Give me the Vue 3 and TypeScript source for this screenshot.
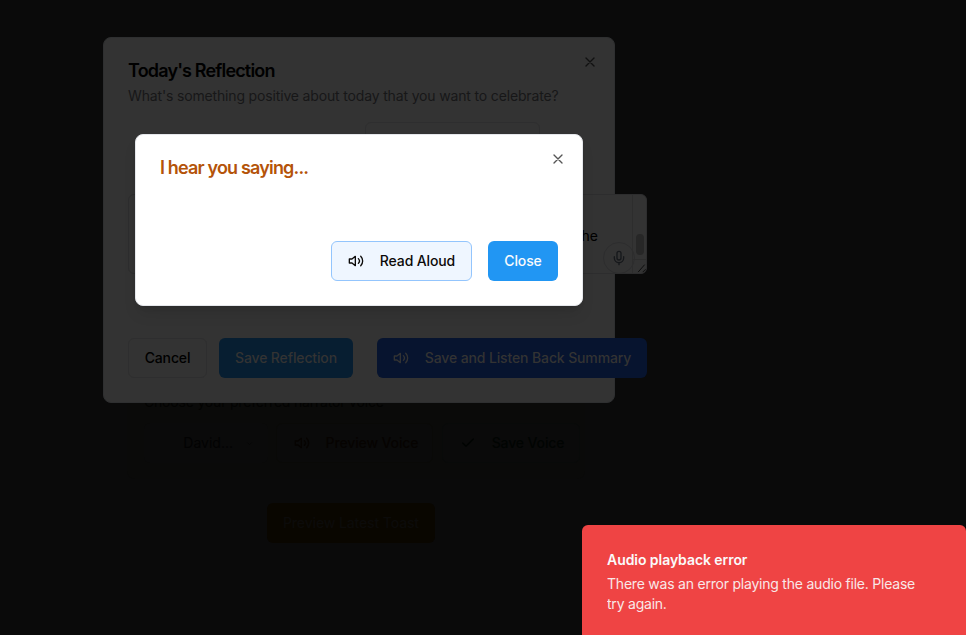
<script setup lang="ts">
import { ref } from 'vue'

const reflectionOpen = ref(true)
const summaryOpen = ref(true)
const entry = ref('the')
</script>

<template>
  <div class="screen">
    <main class="page">
      <section class="voice">
        <p class="voice-label">Choose your preferred narrator voice</p>
        <div class="voice-row">
          <div class="voice-select">
            <span>David...</span>
            <svg class="chev" viewBox="0 0 24 24"><path d="m6 9 6 6 6-6" /></svg>
          </div>
          <button class="btn preview">
            <svg class="icon" viewBox="0 0 24 24"><path d="M11 5 6 9H2v6h4l5 4z" /><path d="M15.54 8.46a5 5 0 0 1 0 7.07" /><path d="M19.07 4.93a10 10 0 0 1 0 14.14" /></svg>
            Preview Voice
          </button>
          <button class="btn keep">
            <svg class="icon" viewBox="0 0 24 24"><path d="M20 6 9 17l-5-5" /></svg>
            Save Voice
          </button>
        </div>
      </section>
      <button class="btn latest">Preview Latest Toast</button>
    </main>

    <section v-if="reflectionOpen" class="dialog reflection">
      <button class="x" aria-label="Close" @click="reflectionOpen = false">
        <svg class="icon" viewBox="0 0 24 24"><path d="M18 6 6 18M6 6l12 12" /></svg>
      </button>
      <h2>Today's Reflection</h2>
      <p class="desc">What's something positive about today that you want to celebrate?</p>
      <div class="picker"></div>
      <div class="field">
        <span class="field-text">{{ entry }}</span>
        <span class="mic">
          <svg class="icon" viewBox="0 0 24 24"><path d="M12 2a3 3 0 0 0-3 3v7a3 3 0 0 0 6 0V5a3 3 0 0 0-3-3Z" /><path d="M19 10v2a7 7 0 0 1-14 0v-2" /><path d="M12 19v3" /></svg>
        </span>
        <div class="scroll">
          <i class="thumb"></i>
          <svg class="grip" viewBox="0 0 14 14"><path d="M5 13 12 5M10 13l3-3" /></svg>
        </div>
      </div>
      <div class="actions">
        <button class="btn cancel">Cancel</button>
        <button class="btn save">Save Reflection</button>
        <button class="btn listen">
          <svg class="icon" viewBox="0 0 24 24"><path d="M11 5 6 9H2v6h4l5 4z" /><path d="M15.54 8.46a5 5 0 0 1 0 7.07" /><path d="M19.07 4.93a10 10 0 0 1 0 14.14" /></svg>
          Save and Listen Back Summary
        </button>
      </div>
    </section>

    <section v-if="summaryOpen" class="dialog summary">
      <button class="x" aria-label="Close" @click="summaryOpen = false">
        <svg class="icon" viewBox="0 0 24 24"><path d="M18 6 6 18M6 6l12 12" /></svg>
      </button>
      <h2>I hear you saying...</h2>
      <div class="actions">
        <button class="btn read">
          <svg class="icon" viewBox="0 0 24 24"><path d="M11 5 6 9H2v6h4l5 4z" /><path d="M15.54 8.46a5 5 0 0 1 0 7.07" /><path d="M19.07 4.93a10 10 0 0 1 0 14.14" /></svg>
          Read Aloud
        </button>
        <button class="btn close" @click="summaryOpen = false">Close</button>
      </div>
    </section>

    <aside class="toast">
      <strong>Audio playback error</strong>
      <p>There was an error playing the audio file. Please try again.</p>
    </aside>
  </div>
</template>

<style>
body {
  background: #0a0a0a;
  overflow: hidden;
}
</style>

<style scoped>
* {
  box-sizing: border-box;
}
.screen {
  position: relative;
  width: 966px;
  height: 635px;
  overflow: hidden;
  background: #0a0a0a;
  font-family: Inter, "Liberation Sans", sans-serif;
  font-size: 14px;
  line-height: 20px;
  color: #000;
}
h2,
p {
  margin: 0;
}
.icon {
  width: 16px;
  height: 16px;
  flex: none;
  fill: none;
  stroke: currentColor;
  stroke-width: 2;
  stroke-linecap: round;
  stroke-linejoin: round;
}
.btn {
  display: flex;
  align-items: center;
  justify-content: center;
  gap: 16px;
  flex: none;
  height: 40px;
  padding: 0;
  border: 1px solid transparent;
  border-radius: 6px;
  font: 500 14px/20px Inter, "Liberation Sans", sans-serif;
  letter-spacing: -0.13px;
  white-space: nowrap;
}
.page {
  display: flex;
  flex-direction: column;
  width: 458px;
  margin-left: 127px;
  padding-top: 375px;
  align-items: flex-start;
}
.voice {
  width: 458px;
  height: 104px;
  padding: 17px 0 0 17px;
  background: #0a0a09;
  border-radius: 8px;
}
.voice-label {
  margin-bottom: 11px;
  letter-spacing: -0.19px;
  color: #030302;
}
.voice-row {
  display: flex;
}
.voice-select {
  display: flex;
  align-items: center;
  justify-content: flex-end;
  gap: 12px;
  width: 124px;
  height: 40px;
  margin-right: 8px;
  padding-right: 14px;
  border-radius: 6px;
  background: #0a0a0a;
  color: #020202;
}
.chev {
  width: 9px;
  height: 9px;
  fill: none;
  stroke: #050505;
  stroke-width: 2;
}
.preview {
  width: 157px;
  margin-right: 9px;
  padding-left: 3px;
  background: #0a0a0a;
  border-color: #090907;
  color: #060301;
}
.keep {
  width: 138px;
  padding-left: 2px;
  background: #0a0a0a;
  border-color: #080a09;
  color: #010402;
}
.latest {
  width: 168px;
  margin: 24px 0 0 140px;
  background: #090600;
  color: #0c0b0a;
}
.dialog {
  position: absolute;
  padding: 24px;
  border: 1px solid;
  border-radius: 8px;
}
.dialog h2 {
  font-size: 18px;
  line-height: 18px;
  font-weight: 600;
  letter-spacing: -0.83px;
}
.x {
  position: absolute;
  top: 16px;
  right: 16px;
  display: flex;
  padding: 0;
  border: 0;
  background: none;
}
.reflection {
  left: 103px;
  top: 37px;
  width: 512px;
  height: 366px;
  background: #333;
  border-color: #2e2f30;
}
.reflection .x {
  color: #111;
}
.desc {
  margin-top: 6px;
  letter-spacing: -0.158px;
  color: #171718;
  white-space: nowrap;
}
.picker {
  width: 175px;
  height: 40px;
  margin: 16px 0 0 237px;
  border: 1px solid #2e2e2f;
  border-radius: 6px;
}
.field {
  position: relative;
  width: 519px;
  height: 80px;
  margin-top: 32px;
  border: 1px solid #2d2d2e;
  border-radius: 6px;
  background: #333;
}
.field-text {
  display: block;
  width: 469px;
  padding-top: 31px;
  text-align: right;
}
.mic {
  position: absolute;
  right: 11px;
  top: 47px;
  display: flex;
  align-items: center;
  justify-content: center;
  width: 32px;
  height: 32px;
  border: 1px solid #2d2d2e;
  border-radius: 50%;
  color: #16181b;
}
.scroll {
  position: absolute;
  top: 0;
  right: 0;
  width: 14px;
  height: 78px;
  border-left: 1px solid #2d2d2d;
}
.thumb {
  position: absolute;
  left: 3px;
  top: 39px;
  width: 8px;
  height: 21px;
  border-radius: 4px;
  background: #272727;
}
.grip {
  position: absolute;
  left: 0;
  bottom: 0;
  width: 14px;
  height: 14px;
  border-top: 1px solid #2d2d2d;
  fill: none;
  stroke: #0c0c0c;
}
.reflection .actions {
  display: flex;
  width: 519px;
  margin-top: 64px;
}
.cancel {
  width: 79px;
  margin-right: 12px;
  background: #333;
  border-color: #2e2e2f;
}
.save {
  width: 134px;
  margin-right: 24px;
  background: #071e31;
  color: #333;
}
.listen {
  width: 270px;
  background: #07142f;
  color: #333;
}
.summary {
  left: 135px;
  top: 134px;
  width: 448px;
  height: 172px;
  background: #fff;
  border-color: #e5e7eb;
  box-shadow: 0 10px 15px -3px rgb(0 0 0 / 0.1), 0 4px 6px -4px rgb(0 0 0 / 0.1);
}
.summary h2 {
  color: #b45309;
}
.summary .x {
  color: #555;
}
.summary .actions {
  display: flex;
  justify-content: flex-end;
  gap: 16px;
  margin-top: 64px;
}
.read {
  width: 141px;
  background: #eff6ff;
  border-color: #93c5fd;
  color: #0c0a09;
}
.close {
  width: 70px;
  background: #2196f3;
  color: #f8fafc;
}
.toast {
  position: absolute;
  left: 582px;
  top: 525px;
  width: 384px;
  height: 118px;
  padding: 25px 49px 24px 25px;
  border-radius: 6px;
  background: #ef4444;
  color: #fafafa;
}
.toast strong {
  display: block;
  font-weight: 600;
  letter-spacing: -0.06px;
}
.toast p {
  margin-top: 4px;
  letter-spacing: -0.22px;
  opacity: 0.9;
}
</style>
